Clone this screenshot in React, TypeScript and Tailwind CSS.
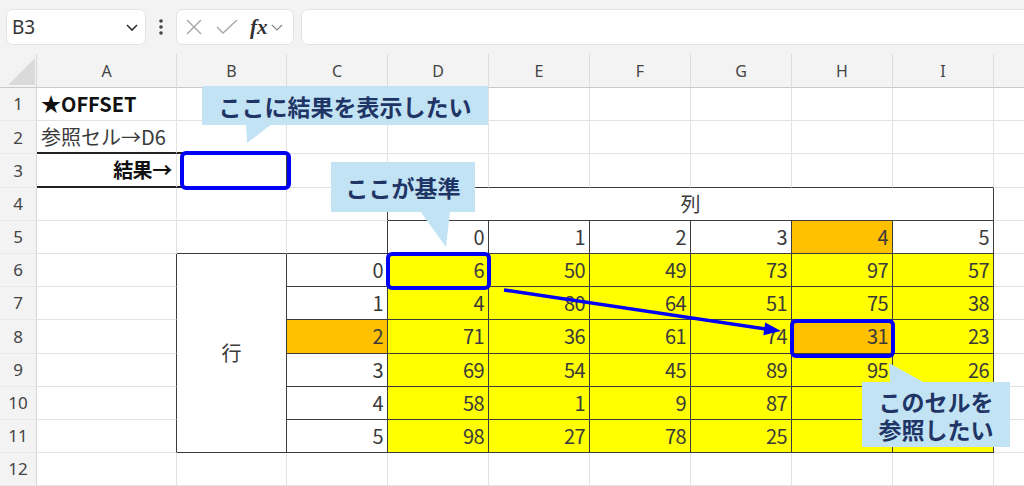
import React from 'react';

const COLS = ['A', 'B', 'C', 'D', 'E', 'F', 'G', 'H', 'I', ''];

const VALUES: (number | null)[][] = [
  [6, 50, 49, 73, 97, 57],
  [4, 80, 64, 51, 75, 38],
  [71, 36, 61, 74, 31, 23],
  [69, 54, 45, 89, 95, 26],
  [58, 1, 9, 87, null, null],
  [98, 27, 78, 25, null, null],
];

type Props = {
  text?: string;
  align: 'left' | 'right' | 'center';
  bold?: boolean;
  bg: 'white' | 'yellow' | 'orange';
  right: 'light' | 'dark';
  bottom: 'light' | 'dark' | 'thick';
  span?: 'col' | 'row';
  tone?: 'black' | 'gray';
};

function cellProps(r: number, ci: number): Props {
  const p: Props = { align: 'right', bg: 'white', right: 'light', bottom: 'light', tone: 'gray' };
  const col = COLS[ci];
  const inDI = ci >= 3 && ci <= 8;
  if (r === 1 && col === 'A') {
    p.text = '★OFFSET';
    p.align = 'left';
    p.bold = true;
    p.tone = 'black';
  }
  if (r === 2 && col === 'A') {
    p.text = '参照セル→D6';
    p.align = 'left';
  }
  if (r === 2 && (col === 'A' || col === 'B')) p.bottom = 'thick';
  if (r === 3 && (col === 'A' || col === 'B')) p.bottom = 'thick';
  if (r === 3 && col === 'A') {
    p.text = '結果→';
    p.bold = true;
    p.tone = 'black';
  }
  if (r === 3 && col === 'B') p.right = 'dark';
  if (r === 3 && inDI) p.bottom = 'dark';
  if (r === 4) {
    if (col === 'C') p.right = 'dark';
    if (col === 'D') {
      p.span = 'col';
      p.text = '列';
      p.align = 'center';
      p.right = 'dark';
      p.bottom = 'dark';
    }
  }
  if (r === 5) {
    if (ci >= 2 && ci <= 8) p.right = 'dark';
    if (ci >= 1 && ci <= 8) p.bottom = 'dark';
    if (inDI) p.text = String(ci - 3);
    if (col === 'H') p.bg = 'orange';
  }
  if (r >= 6 && r <= 11) {
    if (col === 'A') p.right = 'dark';
    if (col === 'B') {
      p.span = 'row';
      p.text = '行';
      p.align = 'center';
      p.right = 'dark';
      p.bottom = 'dark';
    }
    if (col === 'C') {
      p.right = 'dark';
      p.bottom = 'dark';
      p.text = String(r - 6);
      if (r === 8) p.bg = 'orange';
    }
    if (inDI) {
      p.right = 'dark';
      p.bottom = 'dark';
      p.bg = r === 8 && col === 'H' ? 'orange' : 'yellow';
      const v = VALUES[r - 6][ci - 3];
      p.text = v === null ? '' : String(v);
    }
  }
  return p;
}

function renderText(t?: string) {
  if (!t) return null;
  const parts = t.split('→');
  if (parts.length === 1) return t;
  return (
    <>
      {parts[0]}
      <span className="inline-block w-[1em] text-center">→</span>
      {parts[1]}
    </>
  );
}

function Cell({ p }: { p: Props }) {
  const cls = [
    'flex items-center whitespace-nowrap overflow-visible text-[20px] leading-none',
    p.align === 'right'
      ? 'justify-end pr-[4px] tracking-[-0.6px]'
      : p.align === 'left'
      ? 'justify-start pl-[4px]'
      : 'justify-center',
    p.bold ? 'font-bold' : 'font-normal',
    p.tone === 'black' ? 'text-[#111111]' : 'text-[#3a3a3a]',
    p.bg === 'yellow' ? 'bg-[#ffff00]' : p.bg === 'orange' ? 'bg-[#ffc000]' : 'bg-white',
    p.right === 'dark' ? 'border-r border-r-[#3c3c3c]' : 'border-r border-r-[#e2e2e2]',
    p.bottom === 'thick'
      ? 'border-b-2 border-b-[#222222]'
      : p.bottom === 'dark'
      ? 'border-b border-b-[#3c3c3c]'
      : 'border-b border-b-[#e2e2e2]',
    p.span === 'col' ? 'col-span-6' : p.span === 'row' ? 'row-span-6' : '',
  ].join(' ');
  return <div className={cls}>{renderText(p.text)}</div>;
}

function Callout({
  className,
  children,
}: {
  className: string;
  children: React.ReactNode;
}) {
  return (
    <div
      className={
        'absolute z-20 flex items-center justify-center text-center bg-[#c2e3f4] text-[#1f3566] font-bold text-[23px] leading-[28px] ' +
        className
      }
    >
      <p>{children}</p>
    </div>
  );
}

export default function App() {
  const cells: React.ReactNode[] = [];
  cells.push(
    <div key="corner" className="relative bg-[#f3f3f3] border-r border-r-[#d6d6d6] border-b border-b-[#c9c9c9]">
      <svg className="absolute left-0 top-0" width="37" height="34" viewBox="0 0 37 34">
        <polygon points="8,31 35,31 35,4" fill="#dadada" />
      </svg>
    </div>
  );
  COLS.forEach((c, i) => {
    cells.push(
      <div
        key={'h' + i}
        className="flex items-center justify-center bg-[#f3f3f3] border-r border-r-[#dcdcdc] border-b border-b-[#c9c9c9] text-[16px] text-[#444444] font-['Noto_Sans',sans-serif]"
      >
        {c}
      </div>
    );
  });
  for (let r = 1; r <= 12; r++) {
    cells.push(
      <div
        key={'r' + r}
        className="flex items-center justify-center bg-[#f3f3f3] border-r border-r-[#d6d6d6] border-b border-b-[#e8e8e8] text-[17px] text-[#444444] font-['Noto_Sans',sans-serif]"
      >
        {r}
      </div>
    );
    for (let ci = 0; ci < COLS.length; ci++) {
      if (r >= 7 && r <= 11 && ci === 1) continue;
      if (r === 4 && ci >= 4 && ci <= 8) continue;
      cells.push(<Cell key={r + '-' + ci} p={cellProps(r, ci)} />);
    }
  }

  return (
    <div className="relative w-[1024px] h-[486px] overflow-hidden bg-white font-['Noto_Sans_CJK_JP','Noto_Sans',sans-serif]">
      {/* formula bar */}
      <div className="flex h-[54px] items-start overflow-hidden bg-[#f3f3f3] pl-[6px] pt-[9px]">
        <div className="flex h-[36px] w-[140px] shrink-0 items-center justify-between rounded-[7px] border border-[#e4e4e4] bg-white pl-[5px] pr-[6px]">
          <span className="text-[19px] text-[#333333] font-['Noto_Sans',sans-serif]">B3</span>
          <svg width="14" height="10" viewBox="0 0 14 10">
            <polyline points="2,3 7,8 12,3" fill="none" stroke="#333333" strokeWidth="1.6" />
          </svg>
        </div>
        <div className="flex h-[36px] w-[30px] shrink-0 items-center justify-center">
          <svg width="6" height="18" viewBox="0 0 6 18">
            <circle cx="3" cy="3" r="1.8" fill="#444444" />
            <circle cx="3" cy="9" r="1.8" fill="#444444" />
            <circle cx="3" cy="15" r="1.8" fill="#444444" />
          </svg>
        </div>
        <div className="flex h-[36px] w-[118px] shrink-0 items-center rounded-[7px] border border-[#e4e4e4] bg-white pl-[7px]">
          <svg width="20" height="20" viewBox="0 0 20 20">
            <line x1="3" y1="3" x2="17" y2="17" stroke="#a8a8a8" strokeWidth="1.4" />
            <line x1="17" y1="3" x2="3" y2="17" stroke="#a8a8a8" strokeWidth="1.4" />
          </svg>
          <svg className="ml-[11px]" width="24" height="20" viewBox="0 0 24 20">
            <polyline points="2,10 8,16 22,3" fill="none" stroke="#a8a8a8" strokeWidth="1.4" />
          </svg>
          <span className="ml-[11px] text-[21px] font-bold italic leading-none text-[#333333] font-['Liberation_Serif',serif]">
            fx
          </span>
          <svg className="ml-[3px]" width="12" height="10" viewBox="0 0 12 10">
            <polyline points="1,3 6,8 11,3" fill="none" stroke="#888888" strokeWidth="1.2" />
          </svg>
        </div>
        <div className="ml-[7px] h-[36px] w-[760px] shrink-0 rounded-[7px] border border-[#e4e4e4] bg-white" />
      </div>

      {/* sheet grid */}
      <div className="grid grid-cols-[37px_140px_110px_101px_101px_101px_101px_101px_101px_101px_101px] grid-rows-[34px_repeat(12,33.2px)]">
        {cells}
      </div>

      {/* blue highlight boxes */}
      <div className="absolute left-[180px] top-[151px] z-10 h-[39px] w-[111px] rounded-[6px] border-[4.5px] border-[#0000f5]" />
      <div className="absolute left-[386px] top-[252px] z-10 h-[38px] w-[105px] rounded-[6px] border-[4.5px] border-[#0000f5]" />
      <div className="absolute left-[790px] top-[319px] z-10 h-[39px] w-[105px] rounded-[6px] border-[4.5px] border-[#0000f5]" />

      {/* arrow + callout tails */}
      <svg className="absolute left-0 top-0 z-20" width="1024" height="486" viewBox="0 0 1024 486">
        <line x1="504" y1="290" x2="766" y2="329" stroke="#0000f5" strokeWidth="3.5" />
        <polygon points="781,331 763.3,335.3 765.2,322.4" fill="#0000f5" />
        <polygon points="246,124 272,124 247,143" fill="#c2e3f4" />
        <polygon points="420,211 450,211 446,247" fill="#c2e3f4" />
        <polygon points="890,383 925,383 889,363" fill="#c2e3f4" />
      </svg>

      <Callout className="left-[202px] top-[86px] h-[39px] w-[286px]">ここに結果を表示したい</Callout>
      <Callout className="left-[331px] top-[162px] h-[50px] w-[144px]">ここが基準</Callout>
      <Callout className="left-[862px] top-[382px] h-[65px] w-[148px]">
        このセルを
        <br />
        参照したい
      </Callout>
    </div>
  );
}
